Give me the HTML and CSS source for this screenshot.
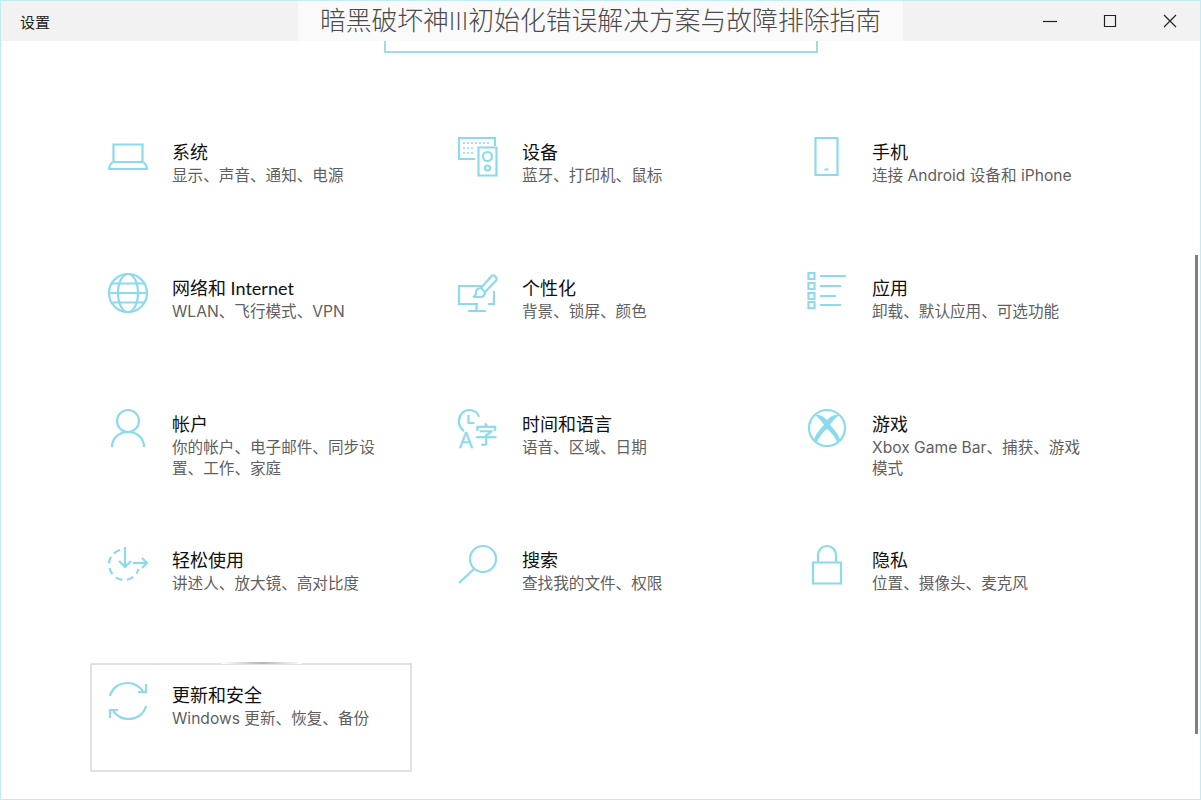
FILE: index.html
```html
<!DOCTYPE html>
<html lang="zh-CN">
<head>
    <meta charset="UTF-8">
    <title>设置</title>
    <link rel="stylesheet" href="styles.css">
</head>
<body>

<div class="window">
    <div class="titlebar">
        <span class="app-name">设置</span>
        <div class="controls">
            <button class="ctl"><svg width="16" height="16" viewBox="0 0 16 16"><path d="M1 8.500h14"/></svg></button>
            <button class="ctl"><svg width="16" height="16" viewBox="0 0 16 16"><path d="M2.500 2.500h11v11h-11z"/></svg></button>
            <button class="ctl"><svg width="16" height="16" viewBox="0 0 16 16"><path d="M2 2l12 12M14 2L2 14"/></svg></button>
        </div>
    </div>

    <!-- Título sobreposto -->
    <div class="page-title">暗黑破坏神III初始化错误解决方案与故障排除指南</div>

    <div class="search-box"></div>

    <div class="grid">
        <div class="item">
            <svg class="icon" viewBox="0 0 40 40"><path d="M5.500 25V7.500h29V25M1 32h38c0-2-2-7-4.500-7h-29C3 25 1 30 1 32z"/></svg>
            <div class="text"><h4>系统</h4><p>显示、声音、通知、电源</p></div>
        </div>
        <div class="item">
            <svg class="icon" viewBox="0 0 40 40"><path d="M17 22H1V1h36v8M20.500 10.500h18v28h-18z"/><circle cx="29.500" cy="19.500" r="4.500"/><circle cx="29.500" cy="31" r="2.500"/><path class="dots" d="M5 6h28M5 11h10M5 16h10"/></svg>
            <div class="text"><h4>设备</h4><p>蓝牙、打印机、鼠标</p></div>
        </div>
        <div class="item">
            <svg class="icon" viewBox="0 0 40 40"><path d="M7.500 1h22v37h-22zM16.500 32.500h4"/></svg>
            <div class="text"><h4>手机</h4><p>连接 Android 设备和 iPhone</p></div>
        </div>

        <div class="item">
            <svg class="icon" viewBox="0 0 40 40"><circle cx="20" cy="20" r="19"/><ellipse cx="20" cy="20" rx="10" ry="19"/><path d="M4 10.500h32M4 29.500h32M1 20h38"/></svg>
            <div class="text"><h4>网络和 Internet</h4><p>WLAN、飞行模式、VPN</p></div>
        </div>
        <div class="item">
            <svg class="icon" viewBox="0 0 40 40"><path d="M24 13H1v18h19M36 18v13h-6M18.500 31v7M10 38h18"/><path d="M38 4.500c-1-2-3-3-4.500-1.500L23 15l4 4L38.500 7c.5-.8 0-1.800-.5-2.500zM23 15c-4 0-5 3-5 5 0 2-1 3-3 4h7c3 0 5-2 5-5"/></svg>
            <div class="text"><h4>个性化</h4><p>背景、锁屏、颜色</p></div>
        </div>
        <div class="item">
            <svg class="icon" viewBox="0 0 40 40"><path d="M.5 0h6v6h-6zM.5 10h6v6h-6zM.5 20h6v6h-6zM.5 29h6v6h-6zM12 3h26M12 13h21M12 23h16M12 32h21"/></svg>
            <div class="text"><h4>应用</h4><p>卸载、默认应用、可选功能</p></div>
        </div>

        <div class="item">
            <svg class="icon" viewBox="0 0 40 40"><circle cx="20" cy="12" r="11"/><path d="M4 38c0-9 7-15 16-15s16 6 16 15"/></svg>
            <div class="text"><h4>帐户</h4><p>你的帐户、电子邮件、同步设置、工作、家庭</p></div>
        </div>
        <div class="item">
            <svg class="icon" viewBox="0 0 40 40"><path d="M6 22C2 19 1 15.500 1 12.500 1 6 5.500 1 11 1s9 3 10 7M10.500 6v8h6"/><text class="glyph" x="1" y="39" font-size="22">A</text><text class="glyph" x="16.500" y="34" font-size="23">字</text></svg>
            <div class="text"><h4>时间和语言</h4><p>语音、区域、日期</p></div>
        </div>
        <div class="item">
            <svg class="icon" viewBox="0 0 40 40"><circle cx="19" cy="19" r="18"/><path class="solid" d="M7 6C12 5 16 8 19 11 22 8 26 5 31 6 27 9 24 13 22 16 26 20 31 26 32 31L29 33C27 28 23 23 19 20 15 23 11 28 9 33L6 31C7 26 12 20 16 16 14 13 11 9 7 6z"/></svg>
            <div class="text"><h4>游戏</h4><p>Xbox Game Bar、捕获、游戏模式</p></div>
        </div>

        <div class="item">
            <svg class="icon" viewBox="0 0 40 40"><path stroke-dasharray="7 4.500" d="M12 5C5 7 1 13 1 19c0 9 7 16 15 16 7 0 13-5 14.500-11"/><path d="M17 2v20M11 16l6 6 6-6M25 18h14M34 13l5 5-5 5"/></svg>
            <div class="text"><h4>轻松使用</h4><p>讲述人、放大镜、高对比度</p></div>
        </div>
        <div class="item">
            <svg class="icon" viewBox="0 0 40 40"><circle cx="25" cy="14" r="13"/><path d="M16 24L1 38"/></svg>
            <div class="text"><h4>搜索</h4><p>查找我的文件、权限</p></div>
        </div>
        <div class="item">
            <svg class="icon" viewBox="0 0 40 40"><path d="M5 17.500h28v21H5zM10 17.500V10c0-5 4-9 9-9s9 4 9 9v7.500"/></svg>
            <div class="text"><h4>隐私</h4><p>位置、摄像头、麦克风</p></div>
        </div>

        <div class="item selected">
            <svg class="icon" viewBox="0 0 40 40"><path d="M2 15C4 7 11 2 20 2c6 0 11 3 15 8M38 3v8h-8"/><path d="M38 25c-2 8-9 13-18 13-6 0-11-3-15-8M2 37v-8h8"/></svg>
            <div class="text"><h4>更新和安全</h4><p>Windows 更新、恢复、备份</p></div>
        </div>
    </div>

    <div class="scrollbar"></div>
</div>

</body>
</html>
```

FILE: styles.css
```css
* {
    box-sizing: border-box;
}
body {
    margin: 0;
    background-color: #fff;
    font-family: "Open Sans", "Noto Sans CJK SC", sans-serif;
}
.window {
    position: relative;
    height: 800px;
    border: 1px solid #c4ebf3;
    background-color: #fff;
    overflow: hidden;
}
.titlebar {
    display: flex;
    align-items: center;
    justify-content: space-between;
    height: 40px;
    background-color: #f2f2f2;
}
.app-name {
    margin-left: 19px;
    font-size: 15px;
    color: #222;
}
.controls {
    display: flex;
}
.ctl {
    display: flex;
    align-items: center;
    justify-content: center;
    width: 60px;
    height: 40px;
    padding: 0;
    border: none;
    background: none;
}
.ctl svg {
    fill: none;
    stroke: #222;
    stroke-width: 1.2;
}
/* Título por cima da barra */
.page-title {
    position: absolute;
    top: -1px;
    left: 297px;
    width: 605px;
    height: 41px;
    background-color: #fafafa;
    color: #4a4a4a;
    font-size: 25.800px;
    font-weight: 300;
    line-height: 41px;
    text-align: center;
    white-space: nowrap;
}
.search-box {
    width: 434px;
    height: 12px;
    margin-left: 383px;
    border: 2px solid #9edcea;
    border-top: none;
}
.grid {
    display: grid;
    grid-template-columns: repeat(3, 322px);
    grid-auto-rows: 109px;
    column-gap: 28px;
    row-gap: 27px;
    margin-top: 66px;
    margin-left: 89px;
}
.item {
    position: relative;
    display: flex;
    align-items: flex-start;
    padding: 16px 16px 0 16px;
    border: 2px solid transparent;
}
.item.selected {
    border-color: #e1e1e1;
}
.item.selected::before {
    content: "";
    position: absolute;
    top: -3px;
    left: 130px;
    width: 80px;
    height: 2px;
    background: linear-gradient(to right, #fff, #b5b5b5, #fff);
}
.icon {
    flex: none;
    width: 40px;
    height: 40px;
    overflow: visible;
    fill: none;
    stroke: #8bdaed;
    stroke-width: 2.200;
}
.icon .solid {
    fill: #8bdaed;
    stroke: none;
}
.icon .dots {
    stroke-width: 1.5;
    stroke-dasharray: 2 2;
}
.icon .glyph {
    fill: #8bdaed;
    stroke: #8bdaed;
    stroke-width: 0.4;
    font-family: "Open Sans", "Noto Sans CJK SC", sans-serif;
}
.text {
    width: 214px;
    margin-top: 2px;
    margin-left: 24px;
}
.item.selected .text {
    margin-top: 1px;
}
.text h4 {
    margin: 0;
    font-family: "Lato", "Noto Sans CJK SC", sans-serif;
    font-size: 18px;
    font-weight: 400;
    line-height: 26px;
    color: #111;
}
.text p {
    margin: 0;
    font-family: "Inter", "Noto Sans CJK SC", sans-serif;
    font-size: 15.600px;
    line-height: 21px;
    color: #5f5f5f;
}
.scrollbar {
    position: absolute;
    top: 254px;
    right: 2px;
    width: 3px;
    height: 479px;
    background-color: #808080;
}
```
